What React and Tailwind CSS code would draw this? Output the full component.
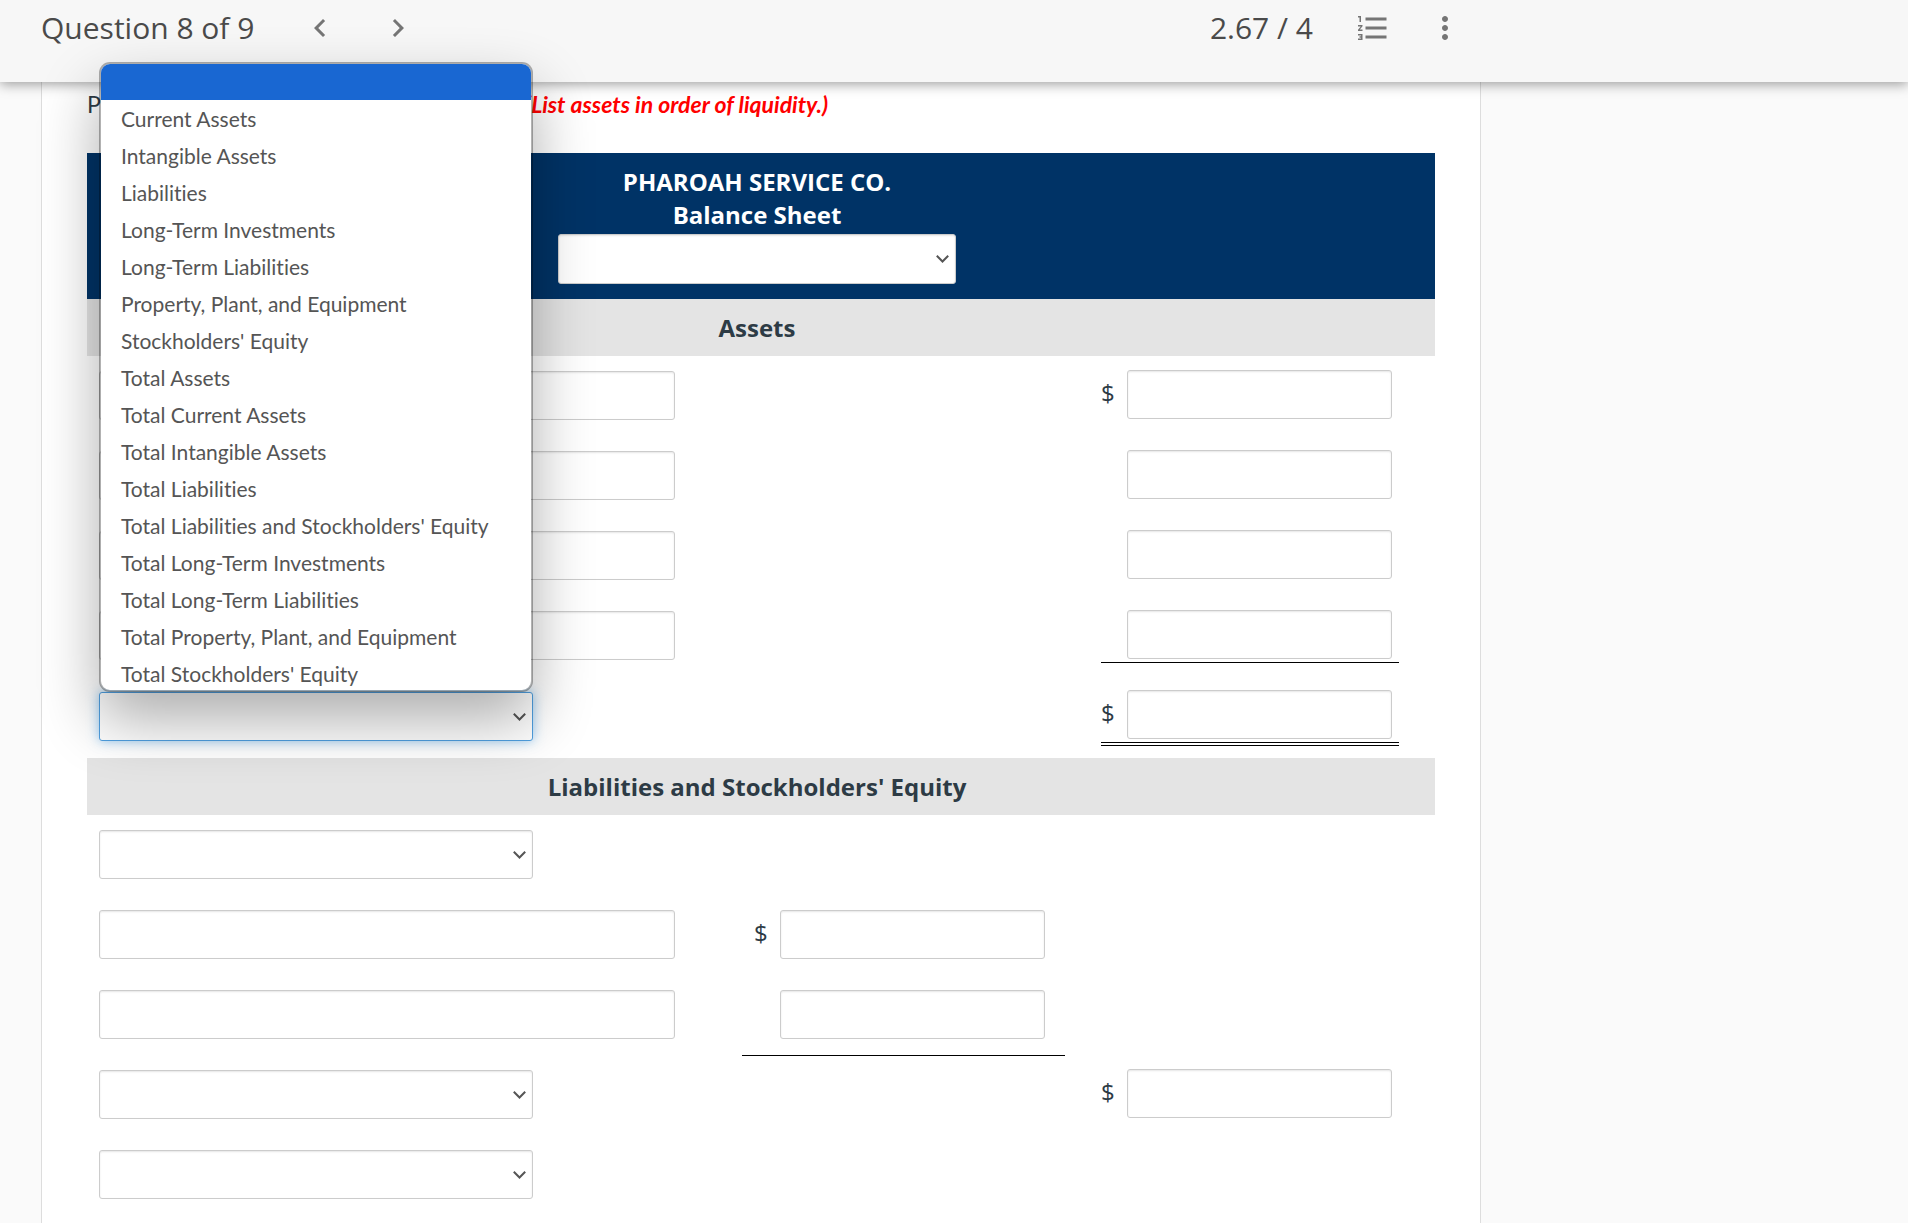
import React from 'react';
import clsx from 'clsx';
import {
  MdChevronLeft,
  MdChevronRight,
  MdFormatListNumbered,
  MdMoreVert
} from 'react-icons/md';

const accountOptions = [
  "",
  "Current Assets",
  "Intangible Assets",
  "Liabilities",
  "Long-Term Investments",
  "Long-Term Liabilities",
  "Property, Plant, and Equipment",
  "Stockholders' Equity",
  "Total Assets",
  "Total Current Assets",
  "Total Intangible Assets",
  "Total Liabilities",
  "Total Liabilities and Stockholders' Equity",
  "Total Long-Term Investments",
  "Total Long-Term Liabilities",
  "Total Property, Plant, and Equipment",
  "Total Stockholders' Equity"
];

const periodOptions = ["", "December 31", "For the Year Ended December 31"];

const assetRows = [
  { kind: "input", right: { dollar: true } },
  { kind: "input", right: {} },
  { kind: "input", right: {} },
  { kind: "input", right: { line: "single" } },
  { kind: "select", open: true, right: { dollar: true, line: "double" } }
];

const liabilityRows = [
  { kind: "select" },
  { kind: "input", middle: { dollar: true } },
  { kind: "input", middle: {}, middleLine: true },
  { kind: "select", right: { dollar: true } },
  { kind: "select" }
];

const fieldStyle = "block w-full rounded-[3px] border bg-white outline-none";

const TextField = ({ label }) => (
  <input
    type="text"
    aria-label={label}
    className={`${fieldStyle} h-[49px] border-[#cccccc] px-3 shadow-[inset_0_1px_2px_rgba(0,0,0,0.1)]`}
  />
);

const OptionMenu = ({ options }) => (
  <ul
    role="listbox"
    aria-label="Account options"
    className="absolute bottom-full left-0 z-20 max-h-[630px] w-full overflow-hidden rounded-[11px] border-2 border-black/30 bg-white bg-clip-padding font-['Lato',sans-serif] text-[21px] text-[#555555] shadow-[0_28px_60px_rgba(0,0,0,0.32)] [font-variant-ligatures:none]"
  >
    {options.map((option, i) => (
      <li
        key={option}
        role="option"
        aria-selected={i === 0}
        className={i === 0 ? "h-9 bg-[#1967d2]" : "h-[37px] pl-5 leading-[38px]"}
      >
        {option}
      </li>
    ))}
  </ul>
);

const SelectField = ({ label, options, open = false, tall = false }) => (
  <div className="relative">
    <select
      aria-label={label}
      className={clsx(
        fieldStyle,
        "appearance-none px-3 text-[21px] text-[#555555]",
        tall ? "h-[50px]" : "h-[49px]",
        open
          ? "border-[#4f9fe0] shadow-[0_0_12px_rgba(82,168,236,0.6)]"
          : "border-[#cccccc] shadow-[inset_0_1px_2px_rgba(0,0,0,0.1)]"
      )}
    >
      {options.map((option) => (
        <option key={option}>{option}</option>
      ))}
    </select>
    <svg
      viewBox="0 0 13 8"
      className="pointer-events-none absolute inset-y-0 right-[7px] my-auto h-2 w-[13px]"
      fill="none"
      stroke="#555555"
      strokeWidth="2"
    >
      <path d="M0.8 0.8 L6.5 6.5 L12.2 0.8" />
    </svg>
    {open && <OptionMenu options={options} />}
  </div>
);

const Amount = ({ label, dollar = false, line }) => (
  <div
    className={clsx(
      "flex",
      line && "pb-[3px]",
      line === "single" && "border-b border-black",
      line === "double" && "border-b-4 border-double border-black"
    )}
  >
    <span className="w-[26px] shrink-0 leading-[45px]">{dollar ? "$" : ""}</span>
    <div className="mr-[7px] grow">
      <TextField label={label} />
    </div>
  </div>
);

const SheetRow = ({ row, name }) => (
  <tr className="h-20">
    <td className={clsx("pl-3 align-top", row.open ? "pt-4" : "pt-[15px]")}>
      <div className={row.kind === "select" ? "w-[434px]" : "w-[576px]"}>
        {row.kind === "select" ? (
          <SelectField label={`${name} account`} options={accountOptions} open={row.open} />
        ) : (
          <TextField label={`${name} account`} />
        )}
      </div>
    </td>
    <td
      className={clsx(
        "pl-3 pr-[13px] pt-[15px] align-top",
        row.middleLine && "border-b border-black"
      )}
    >
      {row.middle && <Amount label={`${name} amount`} {...row.middle} />}
    </td>
    <td className={clsx("px-9 align-top", row.open ? "pb-3 pt-[14px]" : "pt-[14px]")}>
      {row.right && <Amount label={`${name} total`} {...row.right} />}
    </td>
  </tr>
);

const SectionHeading = ({ children }) => (
  <tr className="h-[57px] bg-[#e4e4e4]">
    <th colSpan={3} scope="colgroup" className="pr-2 text-center font-bold">
      {children}
    </th>
  </tr>
);

const TopBar = () => (
  <header className="relative z-10 h-[82px] bg-[#f7f7f7] shadow-[0_2px_12px_rgba(0,0,0,0.4)]">
    <div className="flex h-14 max-w-[1463px] items-center justify-between pl-[41px] font-['Open_Sans',sans-serif] text-[30px] leading-9 text-[#4a4a4a]">
      <div className="flex items-center">
        <h1>Question 8 of 9</h1>
        <div className="ml-12 flex gap-[42px] text-4xl text-[#757575]">
          <button type="button" aria-label="Previous question"><MdChevronLeft /></button>
          <button type="button" aria-label="Next question"><MdChevronRight /></button>
        </div>
      </div>
      <div className="flex items-center">
        <span>2.67 / 4</span>
        <div className="ml-[42px] flex gap-9 text-4xl text-[#757575]">
          <button type="button" aria-label="Question list"><MdFormatListNumbered /></button>
          <button type="button" aria-label="More options"><MdMoreVert /></button>
        </div>
      </div>
    </div>
  </header>
);

const App = () => {
  return (
    <div className="flex min-h-screen flex-col bg-[#fafafa] font-['Lato',sans-serif] text-[#2d3b45]">
      <TopBar />

      <main className="ml-[41px] w-full max-w-[1440px] grow border-x border-[#dddddd] bg-white px-[45px]">
        <p className="flex h-[71px] pt-[7px] text-[23px] leading-[30px]">
          <span className="w-[438px] shrink-0">P</span>
          <strong className="font-bold italic text-[#ff0000]">(List assets in order of liquidity.)</strong>
        </p>

        <table className="w-full table-fixed border-collapse font-['Open_Sans',sans-serif] text-[24px]">
          <colgroup>
            <col className="w-[655px]" />
            <col className="w-[323px]" />
            <col />
          </colgroup>
          <thead>
            <tr className="bg-[#003366] text-white">
              <th colSpan={3} className="pb-[15px] pr-2 pt-3 text-center font-bold leading-[33px]">
                <div>PHAROAH SERVICE CO.</div>
                <div>Balance Sheet</div>
                <div className="mx-auto mt-[3px] w-[398px]">
                  <SelectField label="Statement date" options={periodOptions} tall />
                </div>
              </th>
            </tr>
          </thead>
          <tbody>
            <SectionHeading>Assets</SectionHeading>
            {assetRows.map((row, i) => (
              <SheetRow key={i} row={row} name={`Assets ${i + 1}`} />
            ))}
          </tbody>
          <tbody>
            <SectionHeading>Liabilities and Stockholders' Equity</SectionHeading>
            {liabilityRows.map((row, i) => (
              <SheetRow key={i} row={row} name={`Liabilities ${i + 1}`} />
            ))}
          </tbody>
        </table>
      </main>
    </div>
  );
};

export default App;
